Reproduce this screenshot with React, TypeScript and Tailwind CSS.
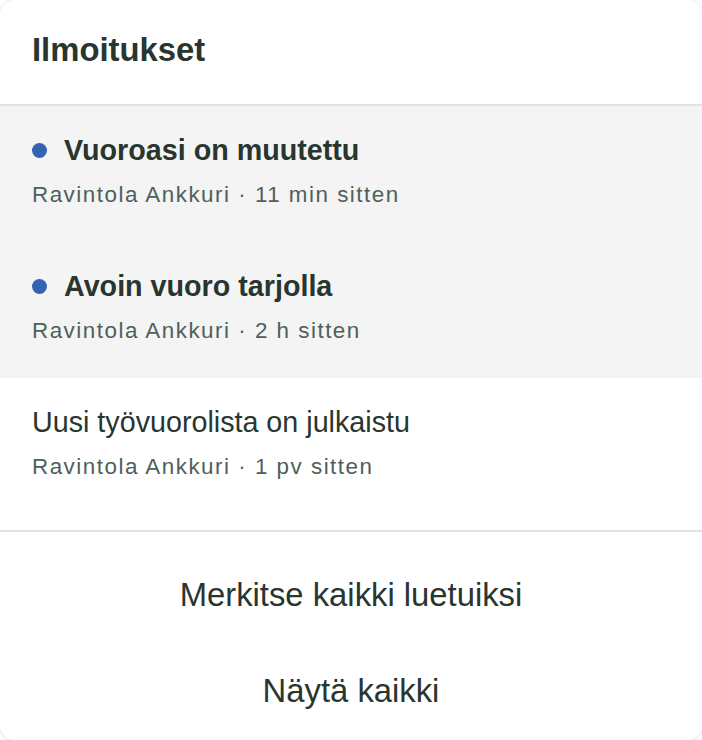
import React from 'react';

interface Notification {
  id: number;
  title: string;
  source: string;
  time: string;
  unread: boolean;
}

const notifications: Notification[] = [
  { id: 1, title: 'Vuoroasi on muutettu', source: 'Ravintola Ankkuri', time: '11 min sitten', unread: true },
  { id: 2, title: 'Avoin vuoro tarjolla', source: 'Ravintola Ankkuri', time: '2 h sitten', unread: true },
  { id: 3, title: 'Uusi työvuorolista on julkaistu', source: 'Ravintola Ankkuri', time: '1 pv sitten', unread: false },
];

const App: React.FC = () => {
  return (
    <div className="h-[740px] w-[702px] bg-white font-['Liberation_Sans',Arial,sans-serif]">
      <div className="flex h-full flex-col overflow-hidden rounded-[14px] bg-white shadow-[0_0_0_1px_rgba(0,0,0,0.05),0_1px_4px_rgba(0,0,0,0.06)]">
        <div className="h-[106px] border-b-2 border-[#e2e2e2] px-8 pt-[34px]">
          <h1 className="text-[32.8px] font-bold leading-[32px] text-[#29352f]">Ilmoitukset</h1>
        </div>

        <div className="border-b-2 border-[#e2e2e2] pb-4">
          {notifications.map(n => (
            <div key={n.id} className={`px-8 pt-7 pb-8 ${n.unread ? 'bg-[#f4f4f4]' : 'bg-white'}`}>
              <div className="flex items-center">
                {n.unread && <span className="mr-[17px] h-[15px] w-[15px] shrink-0 rounded-full bg-[#3463b3]" />}
                <span className={`text-[28.7px] leading-[32px] text-[#29352f] ${n.unread ? 'font-bold' : 'font-normal'}`}>
                  {n.title}
                </span>
              </div>
              <p className="mt-[14px] text-[22.4px] leading-[30px] tracking-[1.5px] text-[#4e605a]">
                {n.source} · {n.time}
              </p>
            </div>
          ))}
        </div>

        <div className="flex flex-col pt-[15px]">
          <button className="h-[96px] text-center text-[32.8px] leading-[32px] text-[#29352f]">
            Merkitse kaikki luetuiksi
          </button>
          <button className="h-[96px] text-center text-[32.8px] leading-[32px] text-[#29352f]">
            Näytä kaikki
          </button>
        </div>
      </div>
    </div>
  );
};

export default App;
